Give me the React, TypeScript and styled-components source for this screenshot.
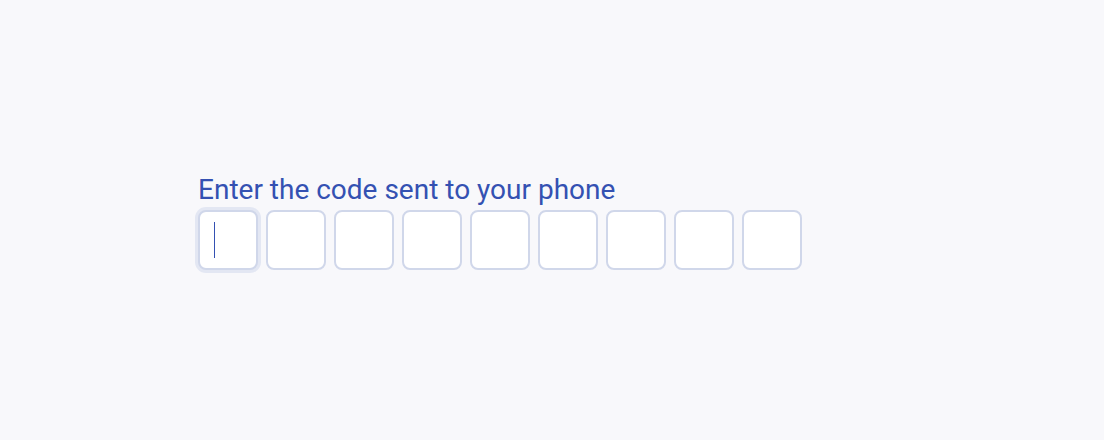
import React from "react";
import styled, { createGlobalStyle } from "styled-components";

const Global = createGlobalStyle`
  html, body { margin: 0; padding: 0; background: #f8f8fb; }
  body { font-family: Roboto, "Noto Sans", sans-serif; }
`;

const Page = styled.main`
  height: 440px;
  display: flex;
  align-items: center;
  padding-left: 198px;
  padding-top: 4px;
  box-sizing: border-box;
`;

const Field = styled.div`
  display: flex;
  flex-direction: column;
  gap: 4px;
`;

const Label = styled.label`
  font-size: 28px;
  line-height: 32px;
  color: #3451b2;
  font-weight: 400;
`;

const Row = styled.div`
  display: flex;
  gap: 8px;
`;

const Cell = styled.div<{ $focused?: boolean }>`
  position: relative;
  width: 60px;
  height: 60px;
  box-sizing: border-box;
  background: #ffffff;
  border: 2px solid #d0d7ea;
  border-radius: 8px;
  box-shadow: ${(p) => (p.$focused ? "0 0 0 3px #e3e7f3" : "none")};
`;

const Caret = styled.span`
  position: absolute;
  left: 14px;
  top: 10px;
  width: 1px;
  height: 36px;
  background: #3451b2;
`;

export default function App() {
  const cells = Array.from({ length: 9 }, (_, i) => i);
  return (
    <>
      <Global />
      <Page>
        <Field>
          <Label>Enter the code sent to your phone</Label>
          <Row>
            {cells.map((i) => (
              <Cell key={i} $focused={i === 0}>
                {i === 0 && <Caret />}
              </Cell>
            ))}
          </Row>
        </Field>
      </Page>
    </>
  );
}
